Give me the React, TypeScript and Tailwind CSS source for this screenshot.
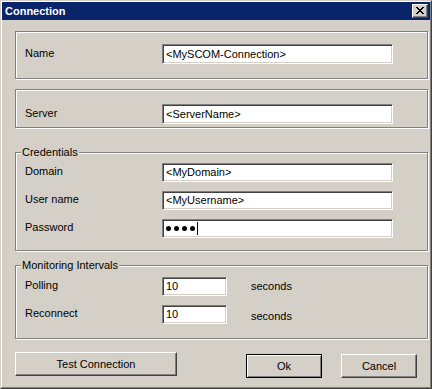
import React from "react";

const sunken =
  "bg-white border border-t-[#808080] border-l-[#808080] border-r-white border-b-white shadow-[inset_1px_1px_0_#404040,inset_-1px_-1px_0_#d4d0c8]";
const etched = "border border-[#808080] shadow-[inset_1px_1px_0_#fff,1px_1px_0_#fff]";
const raised =
  "border border-t-white border-l-white border-r-[#404040] border-b-[#404040] shadow-[inset_-1px_-1px_0_#808080]";

function TextBox({ value, width, height = "h-[19px]" }: { value: string; width: string; height?: string }) {
  return (
    <div className={`${sunken} ${width} ${height} flex items-center pl-[3px] whitespace-nowrap`}>{value}</div>
  );
}

function PasswordBox() {
  return (
    <div className={`${sunken} w-[231px] h-[19px] flex items-center pl-[3px] gap-[3px]`}>
      <span className="w-[5px] h-[5px] rounded-full bg-black" />
      <span className="w-[5px] h-[5px] rounded-full bg-black" />
      <span className="w-[5px] h-[5px] rounded-full bg-black" />
      <span className="w-[5px] h-[5px] rounded-full bg-black" />
      <span className="w-px h-[13px] bg-black -ml-[1px]" />
    </div>
  );
}

function Row({ label, children }: { label: string; children: React.ReactNode }) {
  return (
    <div className="flex items-center">
      <span className="w-[137px] -mt-[2px]">{label}</span>
      {children}
    </div>
  );
}

export default function App(): React.ReactNode {
  return (
    <div className="w-[432px] h-[389px] bg-[#d4d0c8] text-black text-[11px] leading-[13px] font-['Liberation_Sans',Arial,sans-serif] border border-t-[#d4d0c8] border-l-[#d4d0c8] border-r-[#404040] border-b-[#404040]">
      <div className="h-full flex flex-col border border-t-white border-l-white border-r-[#808080] border-b-[#808080]">
        <div className="h-[18px] bg-[#0a246a] flex items-center justify-between pl-[3px] pr-[2px]">
          <span className="font-bold text-white">Connection</span>
          <div className={`${raised} bg-[#d4d0c8] w-[16px] h-[14px] flex items-center justify-center`}>
            <svg width="8" height="7" viewBox="0 0 8 7" shapeRendering="crispEdges" className="-mt-px -ml-px">
              <path
                fill="#000"
                d="M0 0h2v1H0zM6 0h2v1H6zM1 1h2v1H1zM5 1h2v1H5zM2 2h4v1H2zM3 3h2v1H3zM2 4h4v1H2zM1 5h2v1H1zM5 5h2v1H5zM0 6h2v1H0zM6 6h2v1H6z"
              />
            </svg>
          </div>
        </div>

        <div className="flex flex-col pl-[13px] pr-[2px] pt-[11px]">
          <div className={`${etched} h-[48px] pl-[9px] pt-[12px]`}>
            <Row label="Name">
              <TextBox value="<MySCOM-Connection>" width="w-[231px]" height="h-[20px]" />
            </Row>
          </div>

          <div className={`${etched} h-[39px] mt-[10px] pl-[9px] pt-[14px]`}>
            <Row label="Server">
              <TextBox value="<ServerName>" width="w-[231px]" height="h-[20px]" />
            </Row>
          </div>

          <fieldset className={`${etched} mt-[18px] pb-[12px]`}>
            <legend className="ml-[5px] px-[1px] bg-[#d4d0c8]">Credentials</legend>
            <div className="flex flex-col gap-[9px] pl-[9px] pt-[4px]">
              <Row label="Domain">
                <TextBox value="<MyDomain>" width="w-[231px]" />
              </Row>
              <Row label="User name">
                <TextBox value="<MyUsername>" width="w-[231px]" />
              </Row>
              <Row label="Password">
                <PasswordBox />
              </Row>
            </div>
          </fieldset>

          <fieldset className={`${etched} mt-[8px] pb-[14px]`}>
            <legend className="ml-[5px] px-[1px] bg-[#d4d0c8]">Monitoring Intervals</legend>
            <div className="flex flex-col gap-[9px] pl-[9px] pt-[5px]">
              <Row label="Polling">
                <TextBox value="10" width="w-[65px]" />
                <span className="ml-[24px]">seconds</span>
              </Row>
              <Row label="Reconnect">
                <TextBox value="10" width="w-[65px]" />
                <span className="ml-[24px] mt-[4px]">seconds</span>
              </Row>
            </div>
          </fieldset>

          <div className="flex items-start mt-[13px]">
            <button className={`${raised} bg-[#d4d0c8] w-[162px] h-[24px]`}>Test Connection</button>
            <button className="ml-[69px] mt-[2px] w-[76px] h-[24px] bg-[#d4d0c8] border border-black shadow-[inset_1px_1px_0_#fff,inset_-1px_-1px_0_#808080]">
              Ok
            </button>
            <button className={`${raised} ml-[19px] mt-[2px] bg-[#d4d0c8] w-[76px] h-[24px]`}>Cancel</button>
          </div>
        </div>
      </div>
    </div>
  );
}
